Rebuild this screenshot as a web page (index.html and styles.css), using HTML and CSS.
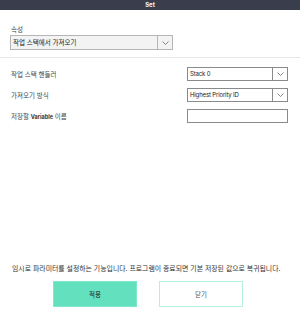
FILE: index.html
```html
<!DOCTYPE html>
<html lang="ko">
<head>
  <meta charset="UTF-8">
  <title>Set</title>
  <link rel="stylesheet" href="styles.css">
</head>
<body>
<div class="dialog">
  <div class="header">Set</div>
  <div class="content">
    <div class="attr">
      <p class="label">속성</p>
      <div class="select select-wide">
        <span class="value">작업 스택에서 가져오기</span>
        <span class="arrow"><svg width="7" height="4" viewBox="0 0 7 4"><polyline points="0.5,0.5 3.5,3.5 6.5,0.5" fill="none" stroke="#666" stroke-width="0.8"/></svg></span>
      </div>
    </div>
    <div class="rows">
      <div class="row">
        <span class="row-label">작업 스택 핸들러</span>
        <div class="select">
          <span class="value latin">Stack 0</span>
          <span class="arrow"><svg width="7" height="4" viewBox="0 0 7 4"><polyline points="0.5,0.5 3.5,3.5 6.5,0.5" fill="none" stroke="#666" stroke-width="0.8"/></svg></span>
        </div>
      </div>
      <div class="row">
        <span class="row-label">가져오기 방식</span>
        <div class="select">
          <span class="value latin">Highest Priority ID</span>
          <span class="arrow"><svg width="7" height="4" viewBox="0 0 7 4"><polyline points="0.5,0.5 3.5,3.5 6.5,0.5" fill="none" stroke="#666" stroke-width="0.8"/></svg></span>
        </div>
      </div>
      <div class="row">
        <span class="row-label">저장할 <strong>Variable</strong> 이름</span>
        <div class="input"></div>
      </div>
    </div>
  </div>
  <div class="footer">
    <p class="notice">임시로 파라미터를 설정하는 기능입니다. 프로그램이 종료되면 기본 저장된 값으로 복귀됩니다.</p>
    <div class="buttons">
      <button class="btn btn-apply">적용</button>
      <button class="btn btn-close">닫기</button>
    </div>
  </div>
</div>
</body>
</html>
```

FILE: styles.css
```css
html,
body {
  margin: 0;
  padding: 0;
  background-color: #fff;
  font-family: 'Noto Sans CJK KR', 'Noto Sans', sans-serif;
}
p {
  margin: 0;
}
.dialog {
  display: flex;
  flex-direction: column;
  width: 300px;
  height: 319px;
}
.header {
  height: 10px;
  line-height: 10px;
  background-color: #393d4c;
  color: #f4f4f4;
  font-family: 'Inter', sans-serif;
  font-size: 6px;
  font-weight: 700;
  text-align: center;
}
.content {
  flex: 1;
}
.attr {
  padding: 15px 10px 7px;
  border-bottom: 1px solid #e6e6e6;
}
.label {
  font-size: 6.5px;
  line-height: 9px;
  color: #444;
  margin: 0 0 1px 1px;
}
.select {
  display: flex;
  box-sizing: border-box;
  width: 101px;
  height: 14px;
  border: 1px solid #8a8a8a;
  background-color: #fff;
}
.select-wide {
  width: 163px;
  height: 15px;
  border-color: #b5b5b5;
  background-color: #f3f3f3;
}
.value {
  flex: 1;
  padding-left: 2px;
  font-size: 6.5px;
  line-height: 12px;
  color: #222;
}
.select-wide .value {
  line-height: 13px;
}
.latin {
  font-family: 'Inter', sans-serif;
  font-size: 6px;
  letter-spacing: -0.15px;
}
.arrow {
  display: flex;
  align-items: center;
  justify-content: center;
  width: 14px;
  border-left: 1px solid #8a8a8a;
}
.select-wide .arrow {
  border-left-color: #b5b5b5;
}
.rows {
  display: flex;
  flex-direction: column;
  gap: 7px;
  padding: 9px 12px 0 11px;
}
.row {
  display: flex;
  justify-content: space-between;
  align-items: center;
}
.row-label {
  font-size: 6.5px;
  color: #444;
}
.row-label strong {
  font-family: 'Inter', sans-serif;
  font-size: 5.5px;
  font-weight: 700;
  color: #333;
}
.input {
  box-sizing: border-box;
  width: 101px;
  height: 14px;
  border: 1px solid #8a8a8a;
}
.footer {
  display: flex;
  flex-direction: column;
  padding-bottom: 12px;
}
.notice {
  padding-left: 12px;
  font-size: 6.9px;
  line-height: 9px;
  color: #333;
}
.buttons {
  display: flex;
  justify-content: center;
  gap: 22px;
  margin-top: 8px;
  padding-right: 4px;
}
.btn {
  box-sizing: border-box;
  width: 84px;
  height: 26px;
  font-family: 'Noto Sans CJK KR', sans-serif;
  font-size: 6.5px;
  padding: 0;
}
.btn-apply {
  background-color: #63e1bf;
  border: 1px solid #7ee8cc;
  color: #222;
}
.btn-close {
  background-color: #fff;
  border: 1px solid #b4f0dd;
  color: #555;
}
```
